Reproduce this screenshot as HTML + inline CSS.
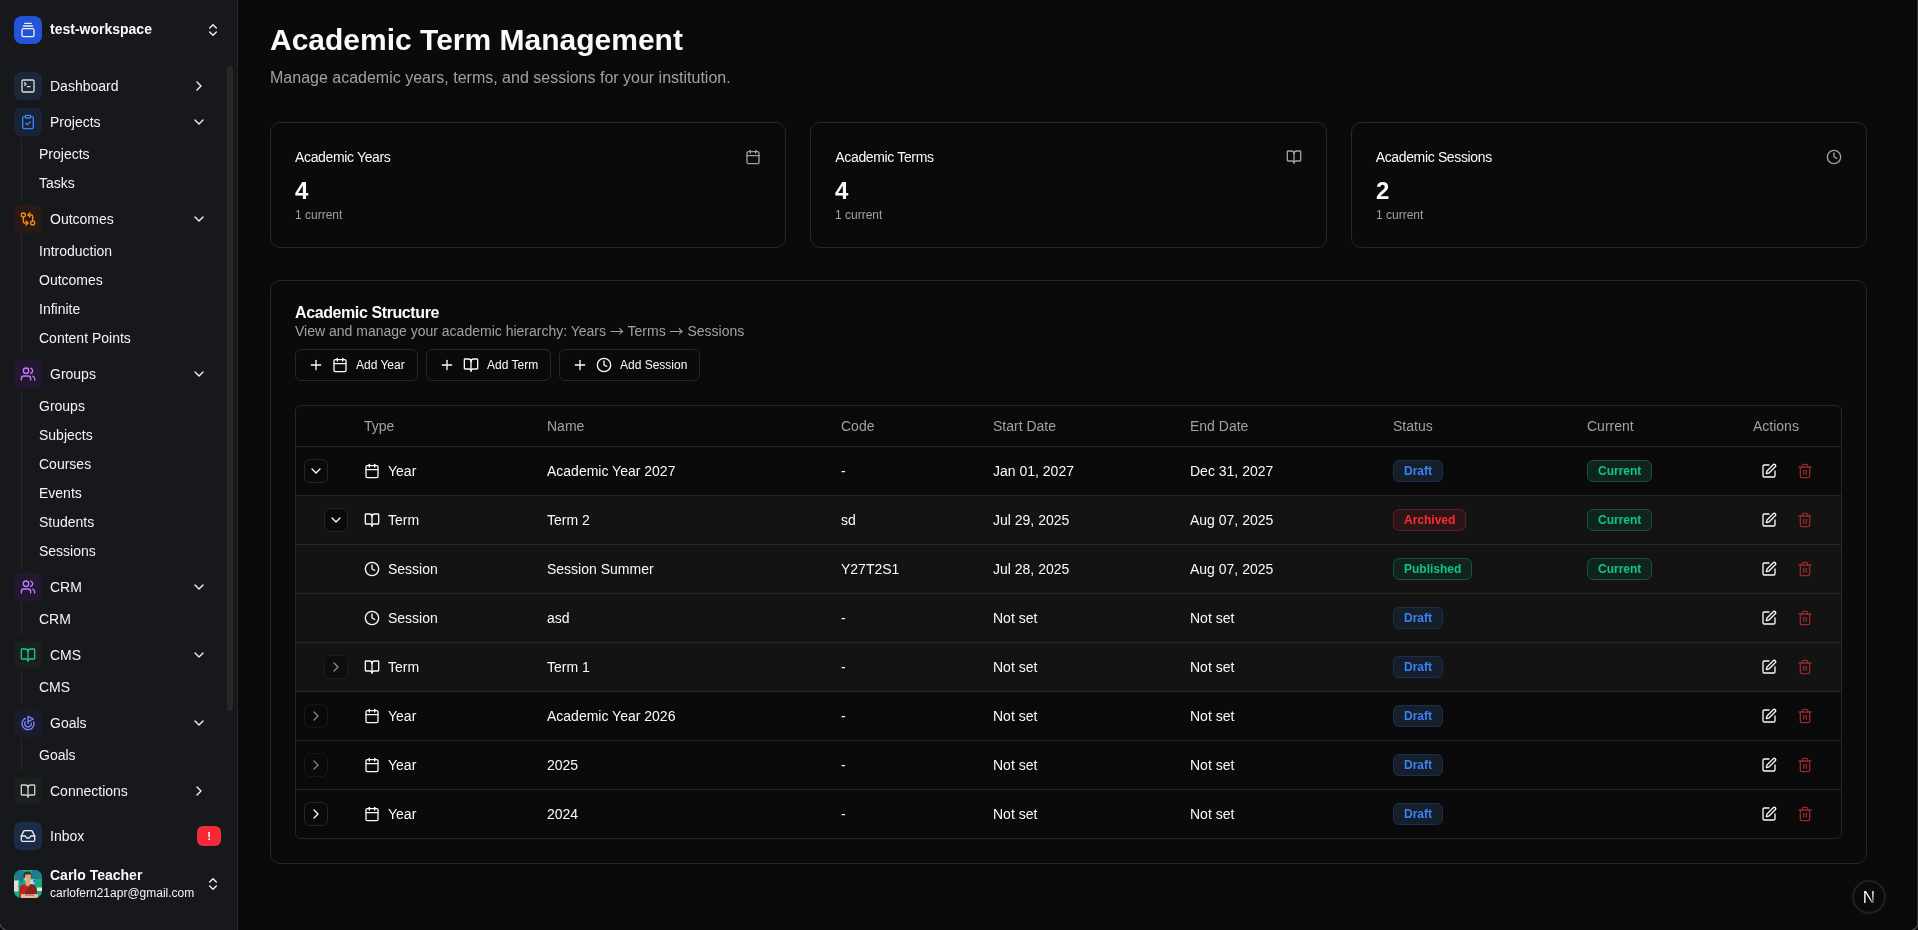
<!DOCTYPE html><html><head><meta charset="utf-8"><title>Academic Term Management</title><style>
*{box-sizing:border-box;margin:0;padding:0}
html,body{width:1918px;height:930px;overflow:hidden;background:#0a0a0a;color:#fafafa;font-family:"Liberation Sans",Arial,sans-serif;font-size:14px;}
.ic{display:block;flex:none}
#sidebg{position:absolute;left:0;top:0;width:238px;height:930px;background:#17181c;border-right:1px solid #262626;}
#side{position:absolute;left:0;top:0;width:238px;height:930px;}
#layer{position:absolute;left:0;top:0;width:1918px;height:930px;will-change:transform;background:transparent}
#frame{position:absolute;left:1917px;top:0;width:1px;height:930px;background:#3a3a3a}
.abs{position:absolute}
.mi{position:absolute;left:8px;width:212px;height:32px;}
.mi .box{position:absolute;left:6px;top:2px;width:28px;height:28px;border-radius:6px;display:flex;align-items:center;justify-content:center}
.mi .lbl{position:absolute;left:42px;top:0;line-height:32px;font-size:14px;color:#f4f4f5}
.mi .chev{position:absolute;left:183px;top:8px;color:#f4f4f5}
.si{position:absolute;left:39px;font-size:14px;line-height:28px;height:28px;color:#f4f4f5}
.subline{position:absolute;left:21px;width:1px;background:#29292b}
#main{position:absolute;left:238px;top:0;width:1679px;height:930px}
h1{position:absolute;left:32px;top:20px;font-size:30px;line-height:40px;font-weight:700;letter-spacing:0px;color:#fafafa;white-space:nowrap}
.sub{position:absolute;left:32px;top:66px;font-size:16px;line-height:24px;color:#a1a1a1;white-space:nowrap}
.card{position:absolute;border:1px solid #26282a;border-radius:10px;background:#0a0a0a}
.stat .t{position:absolute;left:24px;top:24px;font-size:14px;line-height:20px;letter-spacing:-0.35px;color:#fafafa;white-space:nowrap}
.stat .n{position:absolute;left:24px;top:52px;font-size:24px;line-height:32px;font-weight:700}
.stat .c{position:absolute;left:24px;top:84px;font-size:12px;line-height:16px;color:#a1a1a1}
.stat .ic{position:absolute;right:24px;top:26px;color:#a1a1a1}
.btn{position:absolute;top:68px;height:32px;border:1px solid #272727;border-radius:6px;display:flex;align-items:center;font-size:12px;white-space:nowrap;color:#fafafa;background:#0a0a0a}
table{border-collapse:separate;border-spacing:0;width:100%;table-layout:fixed}
th{height:41px;text-align:left;font-weight:400;color:#a1a1a1;font-size:14px;padding:0 8px;border-bottom:1px solid #262626}
td{height:49px;padding:0 8px;border-bottom:1px solid #262626;font-size:14px;white-space:nowrap;vertical-align:middle}
tr:last-child td{border-bottom:none;height:48px}
tr.child td{background:#131313}
.tc{display:flex;align-items:center;gap:8px}
.xb{width:24px;height:24px;border:1px solid #262626;border-radius:6px;display:flex;align-items:center;justify-content:center;background:#0a0a0a;color:#fafafa}
.xb.dis{opacity:.5}
.bd{display:inline-block;height:22px;line-height:20px;padding:0 10px;border-radius:6px;font-size:12px;font-weight:700;border:1px solid}
.bd.draft{color:#3b82f6;background:#151e2b;border-color:#1d2d4b}
.bd.arch{color:#fb2c36;background:#2b1516;border-color:#5e1d20}
.bd.green{color:#10c389;background:#10241d;border-color:#16523f}
.ar{font-family:'Noto Sans CJK SC','Noto Sans CJK JP',sans-serif;line-height:0}
.act{display:flex;align-items:center}
.act .e{margin-left:8px;color:#fafafa}
.act .d{margin-left:20px;color:#952929}
</style></head><body><div id="sidebg"></div><div id="layer"><div id="side"><div class="abs" style="left:14px;top:16px;width:28px;height:28px;border-radius:8px;background:#2253d8;color:#f5ecdc;display:flex;align-items:center;justify-content:center"><svg class="ic " style="" width="16" height="16" viewBox="0 0 24 24" fill="none" stroke="currentColor" stroke-width="2" stroke-linecap="round" stroke-linejoin="round"><path d="M7 2h10"/><path d="M5 6h14"/><rect width="18" height="12" x="3" y="10" rx="2"/></svg></div>
<div class="abs" style="left:50px;top:19px;font-size:14px;line-height:20px;font-weight:700;color:#fafafa">test-workspace</div>
<div class="abs" style="left:205px;top:22px;color:#f4f4f5"><svg class="ic " style="" width="16" height="16" viewBox="0 0 24 24" fill="none" stroke="currentColor" stroke-width="2" stroke-linecap="round" stroke-linejoin="round"><path d="m7 15 5 5 5-5"/><path d="m7 9 5-5 5 5"/></svg></div>
<div class="abs" style="left:227px;top:66px;width:6px;height:645px;border-radius:3px;background:#272728"></div>
<div class="mi" style="top:70px"><div class="box" style="background:#1b2639;color:#e0ddd6"><svg class="ic " style="" width="16" height="16" viewBox="0 0 24 24" fill="none" stroke="currentColor" stroke-width="2" stroke-linecap="round" stroke-linejoin="round"><path d="m7 11 2-2-2-2"/><path d="M11 13h4"/><rect width="18" height="18" x="3" y="3" rx="2" ry="2"/></svg></div><span class="lbl">Dashboard</span><svg class="ic chev" style="" width="16" height="16" viewBox="0 0 24 24" fill="none" stroke="currentColor" stroke-width="2" stroke-linecap="round" stroke-linejoin="round"><path d="m9 18 6-6-6-6"/></svg></div>
<div class="mi" style="top:106px"><div class="box" style="background:#1a2236;color:#3b82f6"><svg class="ic " style="" width="16" height="16" viewBox="0 0 24 24" fill="none" stroke="currentColor" stroke-width="2" stroke-linecap="round" stroke-linejoin="round"><rect width="8" height="4" x="8" y="2" rx="1" ry="1"/><path d="M16 4h2a2 2 0 0 1 2 2v14a2 2 0 0 1-2 2H6a2 2 0 0 1-2-2V6a2 2 0 0 1 2-2h2"/><path d="m9 14 2 2 4-4"/></svg></div><span class="lbl">Projects</span><svg class="ic chev" style="" width="16" height="16" viewBox="0 0 24 24" fill="none" stroke="currentColor" stroke-width="2" stroke-linecap="round" stroke-linejoin="round"><path d="m6 9 6 6 6-6"/></svg></div>
<div class="subline" style="top:138px;height:61px"></div>
<div class="si" style="top:140px">Projects</div>
<div class="si" style="top:169px">Tasks</div>
<div class="mi" style="top:203px"><div class="box" style="background:#2a1a17;color:#fa8a0c"><svg class="ic " style="" width="16" height="16" viewBox="0 0 24 24" fill="none" stroke="currentColor" stroke-width="2" stroke-linecap="round" stroke-linejoin="round"><circle cx="5" cy="6" r="3"/><path d="M12 6h5a2 2 0 0 1 2 2v7"/><path d="m15 9-3-3 3-3"/><circle cx="19" cy="18" r="3"/><path d="M12 18H7a2 2 0 0 1-2-2V9"/><path d="m9 15 3 3-3 3"/></svg></div><span class="lbl">Outcomes</span><svg class="ic chev" style="" width="16" height="16" viewBox="0 0 24 24" fill="none" stroke="currentColor" stroke-width="2" stroke-linecap="round" stroke-linejoin="round"><path d="m6 9 6 6 6-6"/></svg></div>
<div class="subline" style="top:235px;height:119px"></div>
<div class="si" style="top:237px">Introduction</div>
<div class="si" style="top:266px">Outcomes</div>
<div class="si" style="top:295px">Infinite</div>
<div class="si" style="top:324px">Content Points</div>
<div class="mi" style="top:358px"><div class="box" style="background:#241830;color:#c27aff"><svg class="ic " style="" width="16" height="16" viewBox="0 0 24 24" fill="none" stroke="currentColor" stroke-width="2" stroke-linecap="round" stroke-linejoin="round"><path d="M16 21v-2a4 4 0 0 0-4-4H6a4 4 0 0 0-4 4v2"/><circle cx="9" cy="7" r="4"/><path d="M22 21v-2a4 4 0 0 0-3-3.87"/><path d="M16 3.13a4 4 0 0 1 0 7.75"/></svg></div><span class="lbl">Groups</span><svg class="ic chev" style="" width="16" height="16" viewBox="0 0 24 24" fill="none" stroke="currentColor" stroke-width="2" stroke-linecap="round" stroke-linejoin="round"><path d="m6 9 6 6 6-6"/></svg></div>
<div class="subline" style="top:390px;height:177px"></div>
<div class="si" style="top:392px">Groups</div>
<div class="si" style="top:421px">Subjects</div>
<div class="si" style="top:450px">Courses</div>
<div class="si" style="top:479px">Events</div>
<div class="si" style="top:508px">Students</div>
<div class="si" style="top:537px">Sessions</div>
<div class="mi" style="top:571px"><div class="box" style="background:#241830;color:#c27aff"><svg class="ic " style="" width="16" height="16" viewBox="0 0 24 24" fill="none" stroke="currentColor" stroke-width="2" stroke-linecap="round" stroke-linejoin="round"><path d="M16 21v-2a4 4 0 0 0-4-4H6a4 4 0 0 0-4 4v2"/><circle cx="9" cy="7" r="4"/><path d="M22 21v-2a4 4 0 0 0-3-3.87"/><path d="M16 3.13a4 4 0 0 1 0 7.75"/></svg></div><span class="lbl">CRM</span><svg class="ic chev" style="" width="16" height="16" viewBox="0 0 24 24" fill="none" stroke="currentColor" stroke-width="2" stroke-linecap="round" stroke-linejoin="round"><path d="m6 9 6 6 6-6"/></svg></div>
<div class="subline" style="top:603px;height:32px"></div>
<div class="si" style="top:605px">CRM</div>
<div class="mi" style="top:639px"><div class="box" style="background:#1b201e;color:#12c98f"><svg class="ic " style="" width="16" height="16" viewBox="0 0 24 24" fill="none" stroke="currentColor" stroke-width="2" stroke-linecap="round" stroke-linejoin="round"><path d="M12 7v14"/><path d="M3 18a1 1 0 0 1-1-1V4a1 1 0 0 1 1-1h5a4 4 0 0 1 4 4 4 4 0 0 1 4-4h5a1 1 0 0 1 1 1v13a1 1 0 0 1-1 1h-6a3 3 0 0 0-3 3 3 3 0 0 0-3-3z"/></svg></div><span class="lbl">CMS</span><svg class="ic chev" style="" width="16" height="16" viewBox="0 0 24 24" fill="none" stroke="currentColor" stroke-width="2" stroke-linecap="round" stroke-linejoin="round"><path d="m6 9 6 6 6-6"/></svg></div>
<div class="subline" style="top:671px;height:32px"></div>
<div class="si" style="top:673px">CMS</div>
<div class="mi" style="top:707px"><div class="box" style="background:#1a1c2e;color:#7c86ff"><svg class="ic " style="" width="16" height="16" viewBox="0 0 24 24" fill="none" stroke="currentColor" stroke-width="2" stroke-linecap="round" stroke-linejoin="round"><path d="M12 13V2l8 4-8 4"/><path d="M20.561 10.222a9 9 0 1 1-12.55-5.29"/><path d="M8.002 9.997a5 5 0 1 0 8.9 2.02"/></svg></div><span class="lbl">Goals</span><svg class="ic chev" style="" width="16" height="16" viewBox="0 0 24 24" fill="none" stroke="currentColor" stroke-width="2" stroke-linecap="round" stroke-linejoin="round"><path d="m6 9 6 6 6-6"/></svg></div>
<div class="subline" style="top:739px;height:32px"></div>
<div class="si" style="top:741px">Goals</div>
<div class="mi" style="top:775px"><div class="box" style="background:#1b1f1e;color:#cfcfcf"><svg class="ic " style="" width="16" height="16" viewBox="0 0 24 24" fill="none" stroke="currentColor" stroke-width="2" stroke-linecap="round" stroke-linejoin="round"><path d="M12 7v14"/><path d="M3 18a1 1 0 0 1-1-1V4a1 1 0 0 1 1-1h5a4 4 0 0 1 4 4 4 4 0 0 1 4-4h5a1 1 0 0 1 1 1v13a1 1 0 0 1-1 1h-6a3 3 0 0 0-3 3 3 3 0 0 0-3-3z"/></svg></div><span class="lbl">Connections</span><svg class="ic chev" style="" width="16" height="16" viewBox="0 0 24 24" fill="none" stroke="currentColor" stroke-width="2" stroke-linecap="round" stroke-linejoin="round"><path d="m9 18 6-6-6-6"/></svg></div>
<div class="mi" style="top:820px"><div class="box" style="background:#1b2b48;color:#ececec"><svg class="ic " style="" width="16" height="16" viewBox="0 0 24 24" fill="none" stroke="currentColor" stroke-width="2" stroke-linecap="round" stroke-linejoin="round"><polyline points="22 12 16 12 14 15 10 15 8 12 2 12"/><path d="M5.45 5.11 2 12v6a2 2 0 0 0 2 2h16a2 2 0 0 0 2-2v-6l-3.45-6.89A2 2 0 0 0 16.76 4H7.24a2 2 0 0 0-1.79 1.11z"/></svg></div><span class="lbl">Inbox</span></div>
<div class="abs" style="left:197px;top:826px;width:24px;height:20px;border-radius:6px;background:#f42a36;color:#fff;font-size:11px;font-weight:700;text-align:center;line-height:20px">!</div>
<svg class="abs" style="left:14px;top:870px" width="28" height="28" viewBox="0 0 28 28"><defs><clipPath id="av"><rect width="28" height="28" rx="7"/></clipPath></defs><g clip-path="url(#av)"><rect width="28" height="28" fill="#12ad7f"/><rect x="1" y="1" width="8" height="9" fill="#2a55a0" opacity=".55"/><rect x="18" y="0" width="10" height="9" fill="#2a55a0" opacity=".55"/><rect x="6" y="9" width="3" height="4" fill="#2a55a0" opacity=".45"/><rect x="0" y="10.5" width="4.5" height="11" fill="#e2dddd"/><rect x="23" y="17.5" width="5" height="3.5" fill="#ece6e6"/><rect x="16" y="9.5" width="4.5" height="4.5" fill="#d5d8dc"/><rect x="19" y="10" width="2" height="2.5" fill="#3b78f0"/><rect x="4" y="16" width="1.2" height="1.2" fill="#3b78f0"/><path d="M9.3 8V4.2c0-1.6 1.6-2.7 4-2.7s4.2 1.1 4.2 2.7V8z" fill="#3a322f"/><path d="M11.2 4.5h5.6v6l-1 3.5h-3.8l-.8-2z" fill="#e0a583"/><rect x="10.6" y="7.5" width="1.2" height="3" fill="#e6e1dd"/><path d="M5.5 28V20l1-4.5 4.5-1.5h5l5 1.5 2 5V28z" fill="#8c1f1f"/><path d="M6 27v-7l1-4.5 4-1.2 3 3-3 5-1 4.700z" fill="#d4202b" opacity=".75"/><path d="M11.500 14l2.500 3 2-3z" fill="#e0a583"/><path d="M11 14l1.500 2M16 14l-1.200 2" stroke="#f59e0b" stroke-width=".8"/><rect x="7" y="24" width="17" height="4" fill="#e9b796"/><rect x="11" y="24.600" width="9" height=".8" fill="#9a2a25"/></g></svg>
<div class="abs" style="left:50px;top:866px;font-size:14px;line-height:18px;font-weight:700;color:#fafafa">Carlo Teacher</div>
<div class="abs" style="left:50px;top:885px;font-size:12px;line-height:16px;color:#f4f4f5">carlofern21apr@gmail.com</div>
<div class="abs" style="left:205px;top:876px;color:#f4f4f5"><svg class="ic " style="" width="16" height="16" viewBox="0 0 24 24" fill="none" stroke="currentColor" stroke-width="2" stroke-linecap="round" stroke-linejoin="round"><path d="m7 15 5 5 5-5"/><path d="m7 9 5-5 5 5"/></svg></div></div><div id="main"><h1>Academic Term Management</h1>
<div class="sub">Manage academic years, terms, and sessions for your institution.</div>
<div class="card stat" style="left:32px;top:122px;width:516px;height:126px"><div class="t" style="transform:translateX(0px)">Academic Years</div><svg class="ic " style="" width="16" height="16" viewBox="0 0 24 24" fill="none" stroke="currentColor" stroke-width="2" stroke-linecap="round" stroke-linejoin="round"><path d="M8 2v4"/><path d="M16 2v4"/><rect width="18" height="18" x="3" y="4" rx="2"/><path d="M3 10h18"/></svg><div class="n">4</div><div class="c">1 current</div></div>
<div class="card stat" style="left:572px;top:122px;width:517px;height:126px"><div class="t" style="transform:translateX(0.33px)">Academic Terms</div><svg class="ic " style="" width="16" height="16" viewBox="0 0 24 24" fill="none" stroke="currentColor" stroke-width="2" stroke-linecap="round" stroke-linejoin="round"><path d="M12 7v14"/><path d="M3 18a1 1 0 0 1-1-1V4a1 1 0 0 1 1-1h5a4 4 0 0 1 4 4 4 4 0 0 1 4-4h5a1 1 0 0 1 1 1v13a1 1 0 0 1-1 1h-6a3 3 0 0 0-3 3 3 3 0 0 0-3-3z"/></svg><div class="n">4</div><div class="c">1 current</div></div>
<div class="card stat" style="left:1113px;top:122px;width:516px;height:126px"><div class="t" style="transform:translateX(-0.33px)">Academic Sessions</div><svg class="ic " style="" width="16" height="16" viewBox="0 0 24 24" fill="none" stroke="currentColor" stroke-width="2" stroke-linecap="round" stroke-linejoin="round"><circle cx="12" cy="12" r="10"/><polyline points="12 6 12 12 16 14"/></svg><div class="n">2</div><div class="c">1 current</div></div>
<div class="card" style="left:32px;top:280px;width:1597px;height:584px"><div class="abs" style="left:24px;top:20px;font-size:16px;line-height:24px;font-weight:700;letter-spacing:-0.4px;white-space:nowrap">Academic Structure</div><div class="abs" style="left:24px;top:40px;font-size:14px;line-height:20px;color:#a1a1a1;white-space:nowrap">View and manage your academic hierarchy: Years <span class="ar">→</span> Terms <span class="ar">→</span> Sessions</div><div class="btn" style="left:24px;width:123px;padding-left:12px"><svg class="ic " style="" width="16" height="16" viewBox="0 0 24 24" fill="none" stroke="currentColor" stroke-width="2" stroke-linecap="round" stroke-linejoin="round"><path d="M5 12h14"/><path d="M12 5v14"/></svg><span style="margin-left:8px"></span><svg class="ic " style="" width="16" height="16" viewBox="0 0 24 24" fill="none" stroke="currentColor" stroke-width="2" stroke-linecap="round" stroke-linejoin="round"><path d="M8 2v4"/><path d="M16 2v4"/><rect width="18" height="18" x="3" y="4" rx="2"/><path d="M3 10h18"/></svg><span style="margin-left:8px">Add Year</span></div><div class="btn" style="left:155px;width:125px;padding-left:12px"><svg class="ic " style="" width="16" height="16" viewBox="0 0 24 24" fill="none" stroke="currentColor" stroke-width="2" stroke-linecap="round" stroke-linejoin="round"><path d="M5 12h14"/><path d="M12 5v14"/></svg><span style="margin-left:8px"></span><svg class="ic " style="" width="16" height="16" viewBox="0 0 24 24" fill="none" stroke="currentColor" stroke-width="2" stroke-linecap="round" stroke-linejoin="round"><path d="M12 7v14"/><path d="M3 18a1 1 0 0 1-1-1V4a1 1 0 0 1 1-1h5a4 4 0 0 1 4 4 4 4 0 0 1 4-4h5a1 1 0 0 1 1 1v13a1 1 0 0 1-1 1h-6a3 3 0 0 0-3 3 3 3 0 0 0-3-3z"/></svg><span style="margin-left:8px">Add Term</span></div><div class="btn" style="left:288px;width:141px;padding-left:12px"><svg class="ic " style="" width="16" height="16" viewBox="0 0 24 24" fill="none" stroke="currentColor" stroke-width="2" stroke-linecap="round" stroke-linejoin="round"><path d="M5 12h14"/><path d="M12 5v14"/></svg><span style="margin-left:8px"></span><svg class="ic " style="" width="16" height="16" viewBox="0 0 24 24" fill="none" stroke="currentColor" stroke-width="2" stroke-linecap="round" stroke-linejoin="round"><circle cx="12" cy="12" r="10"/><polyline points="12 6 12 12 16 14"/></svg><span style="margin-left:8px">Add Session</span></div><div class="abs" style="left:24px;top:124px;width:1547px;height:434px;border:1px solid #262626;border-radius:6px;overflow:hidden"><table><colgroup><col style="width:60px"><col style="width:183px"><col style="width:294px"><col style="width:152px"><col style="width:197px"><col style="width:203px"><col style="width:194px"><col style="width:166px"><col style="width:96px"></colgroup><thead><tr><th></th><th>Type</th><th>Name</th><th>Code</th><th>Start Date</th><th>End Date</th><th>Status</th><th>Current</th><th>Actions</th></tr></thead><tbody><tr class="year"><td><div class="xb" style="margin-left:0px"><svg class="ic " style="" width="16" height="16" viewBox="0 0 24 24" fill="none" stroke="currentColor" stroke-width="2" stroke-linecap="round" stroke-linejoin="round"><path d="m6 9 6 6 6-6"/></svg></div></td><td><div class="tc"><svg class="ic " style="" width="16" height="16" viewBox="0 0 24 24" fill="none" stroke="currentColor" stroke-width="2" stroke-linecap="round" stroke-linejoin="round"><path d="M8 2v4"/><path d="M16 2v4"/><rect width="18" height="18" x="3" y="4" rx="2"/><path d="M3 10h18"/></svg><span>Year</span></div></td><td>Academic Year 2027</td><td>-</td><td>Jan 01, 2027</td><td>Dec 31, 2027</td><td><span class="bd draft">Draft</span></td><td><span class="bd green">Current</span></td><td><div class="act"><svg class="ic e" style="" width="16" height="16" viewBox="0 0 24 24" fill="none" stroke="currentColor" stroke-width="2" stroke-linecap="round" stroke-linejoin="round"><path d="M12 3H5a2 2 0 0 0-2 2v14a2 2 0 0 0 2 2h14a2 2 0 0 0 2-2v-7"/><path d="M18.375 2.625a1 1 0 0 1 3 3l-9.013 9.014a2 2 0 0 1-.853.505l-2.873.84a.5.5 0 0 1-.62-.62l.84-2.873a2 2 0 0 1 .506-.852z"/></svg><svg class="ic d" style="" width="16" height="16" viewBox="0 0 24 24" fill="none" stroke="currentColor" stroke-width="2" stroke-linecap="round" stroke-linejoin="round"><path d="M3 6h18"/><path d="M19 6v14c0 1-1 2-2 2H7c-1 0-2-1-2-2V6"/><path d="M8 6V4c0-1 1-2 2-2h4c1 0 2 1 2 2v2"/><line x1="10" x2="10" y1="11" y2="17"/><line x1="14" x2="14" y1="11" y2="17"/></svg></div></td></tr><tr class="child"><td><div class="xb" style="margin-left:20px"><svg class="ic " style="" width="16" height="16" viewBox="0 0 24 24" fill="none" stroke="currentColor" stroke-width="2" stroke-linecap="round" stroke-linejoin="round"><path d="m6 9 6 6 6-6"/></svg></div></td><td><div class="tc"><svg class="ic " style="" width="16" height="16" viewBox="0 0 24 24" fill="none" stroke="currentColor" stroke-width="2" stroke-linecap="round" stroke-linejoin="round"><path d="M12 7v14"/><path d="M3 18a1 1 0 0 1-1-1V4a1 1 0 0 1 1-1h5a4 4 0 0 1 4 4 4 4 0 0 1 4-4h5a1 1 0 0 1 1 1v13a1 1 0 0 1-1 1h-6a3 3 0 0 0-3 3 3 3 0 0 0-3-3z"/></svg><span>Term</span></div></td><td>Term 2</td><td>sd</td><td>Jul 29, 2025</td><td>Aug 07, 2025</td><td><span class="bd arch">Archived</span></td><td><span class="bd green">Current</span></td><td><div class="act"><svg class="ic e" style="" width="16" height="16" viewBox="0 0 24 24" fill="none" stroke="currentColor" stroke-width="2" stroke-linecap="round" stroke-linejoin="round"><path d="M12 3H5a2 2 0 0 0-2 2v14a2 2 0 0 0 2 2h14a2 2 0 0 0 2-2v-7"/><path d="M18.375 2.625a1 1 0 0 1 3 3l-9.013 9.014a2 2 0 0 1-.853.505l-2.873.84a.5.5 0 0 1-.62-.62l.84-2.873a2 2 0 0 1 .506-.852z"/></svg><svg class="ic d" style="" width="16" height="16" viewBox="0 0 24 24" fill="none" stroke="currentColor" stroke-width="2" stroke-linecap="round" stroke-linejoin="round"><path d="M3 6h18"/><path d="M19 6v14c0 1-1 2-2 2H7c-1 0-2-1-2-2V6"/><path d="M8 6V4c0-1 1-2 2-2h4c1 0 2 1 2 2v2"/><line x1="10" x2="10" y1="11" y2="17"/><line x1="14" x2="14" y1="11" y2="17"/></svg></div></td></tr><tr class="child"><td></td><td><div class="tc"><svg class="ic " style="" width="16" height="16" viewBox="0 0 24 24" fill="none" stroke="currentColor" stroke-width="2" stroke-linecap="round" stroke-linejoin="round"><circle cx="12" cy="12" r="10"/><polyline points="12 6 12 12 16 14"/></svg><span>Session</span></div></td><td>Session Summer</td><td>Y27T2S1</td><td>Jul 28, 2025</td><td>Aug 07, 2025</td><td><span class="bd green">Published</span></td><td><span class="bd green">Current</span></td><td><div class="act"><svg class="ic e" style="" width="16" height="16" viewBox="0 0 24 24" fill="none" stroke="currentColor" stroke-width="2" stroke-linecap="round" stroke-linejoin="round"><path d="M12 3H5a2 2 0 0 0-2 2v14a2 2 0 0 0 2 2h14a2 2 0 0 0 2-2v-7"/><path d="M18.375 2.625a1 1 0 0 1 3 3l-9.013 9.014a2 2 0 0 1-.853.505l-2.873.84a.5.5 0 0 1-.62-.62l.84-2.873a2 2 0 0 1 .506-.852z"/></svg><svg class="ic d" style="" width="16" height="16" viewBox="0 0 24 24" fill="none" stroke="currentColor" stroke-width="2" stroke-linecap="round" stroke-linejoin="round"><path d="M3 6h18"/><path d="M19 6v14c0 1-1 2-2 2H7c-1 0-2-1-2-2V6"/><path d="M8 6V4c0-1 1-2 2-2h4c1 0 2 1 2 2v2"/><line x1="10" x2="10" y1="11" y2="17"/><line x1="14" x2="14" y1="11" y2="17"/></svg></div></td></tr><tr class="child"><td></td><td><div class="tc"><svg class="ic " style="" width="16" height="16" viewBox="0 0 24 24" fill="none" stroke="currentColor" stroke-width="2" stroke-linecap="round" stroke-linejoin="round"><circle cx="12" cy="12" r="10"/><polyline points="12 6 12 12 16 14"/></svg><span>Session</span></div></td><td>asd</td><td>-</td><td>Not set</td><td>Not set</td><td><span class="bd draft">Draft</span></td><td></td><td><div class="act"><svg class="ic e" style="" width="16" height="16" viewBox="0 0 24 24" fill="none" stroke="currentColor" stroke-width="2" stroke-linecap="round" stroke-linejoin="round"><path d="M12 3H5a2 2 0 0 0-2 2v14a2 2 0 0 0 2 2h14a2 2 0 0 0 2-2v-7"/><path d="M18.375 2.625a1 1 0 0 1 3 3l-9.013 9.014a2 2 0 0 1-.853.505l-2.873.84a.5.5 0 0 1-.62-.62l.84-2.873a2 2 0 0 1 .506-.852z"/></svg><svg class="ic d" style="" width="16" height="16" viewBox="0 0 24 24" fill="none" stroke="currentColor" stroke-width="2" stroke-linecap="round" stroke-linejoin="round"><path d="M3 6h18"/><path d="M19 6v14c0 1-1 2-2 2H7c-1 0-2-1-2-2V6"/><path d="M8 6V4c0-1 1-2 2-2h4c1 0 2 1 2 2v2"/><line x1="10" x2="10" y1="11" y2="17"/><line x1="14" x2="14" y1="11" y2="17"/></svg></div></td></tr><tr class="child"><td><div class="xb dis" style="margin-left:20px"><svg class="ic " style="" width="16" height="16" viewBox="0 0 24 24" fill="none" stroke="currentColor" stroke-width="2" stroke-linecap="round" stroke-linejoin="round"><path d="m9 18 6-6-6-6"/></svg></div></td><td><div class="tc"><svg class="ic " style="" width="16" height="16" viewBox="0 0 24 24" fill="none" stroke="currentColor" stroke-width="2" stroke-linecap="round" stroke-linejoin="round"><path d="M12 7v14"/><path d="M3 18a1 1 0 0 1-1-1V4a1 1 0 0 1 1-1h5a4 4 0 0 1 4 4 4 4 0 0 1 4-4h5a1 1 0 0 1 1 1v13a1 1 0 0 1-1 1h-6a3 3 0 0 0-3 3 3 3 0 0 0-3-3z"/></svg><span>Term</span></div></td><td>Term 1</td><td>-</td><td>Not set</td><td>Not set</td><td><span class="bd draft">Draft</span></td><td></td><td><div class="act"><svg class="ic e" style="" width="16" height="16" viewBox="0 0 24 24" fill="none" stroke="currentColor" stroke-width="2" stroke-linecap="round" stroke-linejoin="round"><path d="M12 3H5a2 2 0 0 0-2 2v14a2 2 0 0 0 2 2h14a2 2 0 0 0 2-2v-7"/><path d="M18.375 2.625a1 1 0 0 1 3 3l-9.013 9.014a2 2 0 0 1-.853.505l-2.873.84a.5.5 0 0 1-.62-.62l.84-2.873a2 2 0 0 1 .506-.852z"/></svg><svg class="ic d" style="" width="16" height="16" viewBox="0 0 24 24" fill="none" stroke="currentColor" stroke-width="2" stroke-linecap="round" stroke-linejoin="round"><path d="M3 6h18"/><path d="M19 6v14c0 1-1 2-2 2H7c-1 0-2-1-2-2V6"/><path d="M8 6V4c0-1 1-2 2-2h4c1 0 2 1 2 2v2"/><line x1="10" x2="10" y1="11" y2="17"/><line x1="14" x2="14" y1="11" y2="17"/></svg></div></td></tr><tr class="year"><td><div class="xb dis" style="margin-left:0px"><svg class="ic " style="" width="16" height="16" viewBox="0 0 24 24" fill="none" stroke="currentColor" stroke-width="2" stroke-linecap="round" stroke-linejoin="round"><path d="m9 18 6-6-6-6"/></svg></div></td><td><div class="tc"><svg class="ic " style="" width="16" height="16" viewBox="0 0 24 24" fill="none" stroke="currentColor" stroke-width="2" stroke-linecap="round" stroke-linejoin="round"><path d="M8 2v4"/><path d="M16 2v4"/><rect width="18" height="18" x="3" y="4" rx="2"/><path d="M3 10h18"/></svg><span>Year</span></div></td><td>Academic Year 2026</td><td>-</td><td>Not set</td><td>Not set</td><td><span class="bd draft">Draft</span></td><td></td><td><div class="act"><svg class="ic e" style="" width="16" height="16" viewBox="0 0 24 24" fill="none" stroke="currentColor" stroke-width="2" stroke-linecap="round" stroke-linejoin="round"><path d="M12 3H5a2 2 0 0 0-2 2v14a2 2 0 0 0 2 2h14a2 2 0 0 0 2-2v-7"/><path d="M18.375 2.625a1 1 0 0 1 3 3l-9.013 9.014a2 2 0 0 1-.853.505l-2.873.84a.5.5 0 0 1-.62-.62l.84-2.873a2 2 0 0 1 .506-.852z"/></svg><svg class="ic d" style="" width="16" height="16" viewBox="0 0 24 24" fill="none" stroke="currentColor" stroke-width="2" stroke-linecap="round" stroke-linejoin="round"><path d="M3 6h18"/><path d="M19 6v14c0 1-1 2-2 2H7c-1 0-2-1-2-2V6"/><path d="M8 6V4c0-1 1-2 2-2h4c1 0 2 1 2 2v2"/><line x1="10" x2="10" y1="11" y2="17"/><line x1="14" x2="14" y1="11" y2="17"/></svg></div></td></tr><tr class="year"><td><div class="xb dis" style="margin-left:0px"><svg class="ic " style="" width="16" height="16" viewBox="0 0 24 24" fill="none" stroke="currentColor" stroke-width="2" stroke-linecap="round" stroke-linejoin="round"><path d="m9 18 6-6-6-6"/></svg></div></td><td><div class="tc"><svg class="ic " style="" width="16" height="16" viewBox="0 0 24 24" fill="none" stroke="currentColor" stroke-width="2" stroke-linecap="round" stroke-linejoin="round"><path d="M8 2v4"/><path d="M16 2v4"/><rect width="18" height="18" x="3" y="4" rx="2"/><path d="M3 10h18"/></svg><span>Year</span></div></td><td>2025</td><td>-</td><td>Not set</td><td>Not set</td><td><span class="bd draft">Draft</span></td><td></td><td><div class="act"><svg class="ic e" style="" width="16" height="16" viewBox="0 0 24 24" fill="none" stroke="currentColor" stroke-width="2" stroke-linecap="round" stroke-linejoin="round"><path d="M12 3H5a2 2 0 0 0-2 2v14a2 2 0 0 0 2 2h14a2 2 0 0 0 2-2v-7"/><path d="M18.375 2.625a1 1 0 0 1 3 3l-9.013 9.014a2 2 0 0 1-.853.505l-2.873.84a.5.5 0 0 1-.62-.62l.84-2.873a2 2 0 0 1 .506-.852z"/></svg><svg class="ic d" style="" width="16" height="16" viewBox="0 0 24 24" fill="none" stroke="currentColor" stroke-width="2" stroke-linecap="round" stroke-linejoin="round"><path d="M3 6h18"/><path d="M19 6v14c0 1-1 2-2 2H7c-1 0-2-1-2-2V6"/><path d="M8 6V4c0-1 1-2 2-2h4c1 0 2 1 2 2v2"/><line x1="10" x2="10" y1="11" y2="17"/><line x1="14" x2="14" y1="11" y2="17"/></svg></div></td></tr><tr class="year"><td><div class="xb" style="margin-left:0px"><svg class="ic " style="" width="16" height="16" viewBox="0 0 24 24" fill="none" stroke="currentColor" stroke-width="2" stroke-linecap="round" stroke-linejoin="round"><path d="m9 18 6-6-6-6"/></svg></div></td><td><div class="tc"><svg class="ic " style="" width="16" height="16" viewBox="0 0 24 24" fill="none" stroke="currentColor" stroke-width="2" stroke-linecap="round" stroke-linejoin="round"><path d="M8 2v4"/><path d="M16 2v4"/><rect width="18" height="18" x="3" y="4" rx="2"/><path d="M3 10h18"/></svg><span>Year</span></div></td><td>2024</td><td>-</td><td>Not set</td><td>Not set</td><td><span class="bd draft">Draft</span></td><td></td><td><div class="act"><svg class="ic e" style="" width="16" height="16" viewBox="0 0 24 24" fill="none" stroke="currentColor" stroke-width="2" stroke-linecap="round" stroke-linejoin="round"><path d="M12 3H5a2 2 0 0 0-2 2v14a2 2 0 0 0 2 2h14a2 2 0 0 0 2-2v-7"/><path d="M18.375 2.625a1 1 0 0 1 3 3l-9.013 9.014a2 2 0 0 1-.853.505l-2.873.84a.5.5 0 0 1-.62-.62l.84-2.873a2 2 0 0 1 .506-.852z"/></svg><svg class="ic d" style="" width="16" height="16" viewBox="0 0 24 24" fill="none" stroke="currentColor" stroke-width="2" stroke-linecap="round" stroke-linejoin="round"><path d="M3 6h18"/><path d="M19 6v14c0 1-1 2-2 2H7c-1 0-2-1-2-2V6"/><path d="M8 6V4c0-1 1-2 2-2h4c1 0 2 1 2 2v2"/><line x1="10" x2="10" y1="11" y2="17"/><line x1="14" x2="14" y1="11" y2="17"/></svg></div></td></tr></tbody></table></div></div>
<div class="abs" style="left:1614px;top:880px;width:34px;height:34px;border-radius:17px;border:2px solid #1f2224;background:#0a0a0a;text-align:center"><span style="display:inline-block;font-size:17px;line-height:31px;background:linear-gradient(130deg,#fff 52%,rgba(255,255,255,0.05) 82%);-webkit-background-clip:text;background-clip:text;color:transparent">N</span></div></div></div><div id="frame"></div><div style="position:absolute;left:0;top:924px;width:6px;height:6px;background:radial-gradient(circle at 6px 0,transparent 4.600px,#454545 5.200px,#454545 6px,#000 6.800px)"></div><div style="position:absolute;left:1912px;top:924px;width:6px;height:6px;background:radial-gradient(circle at 0 0,transparent 4.600px,#454545 5.200px,#454545 6px,#000 6.800px)"></div></body></html>
